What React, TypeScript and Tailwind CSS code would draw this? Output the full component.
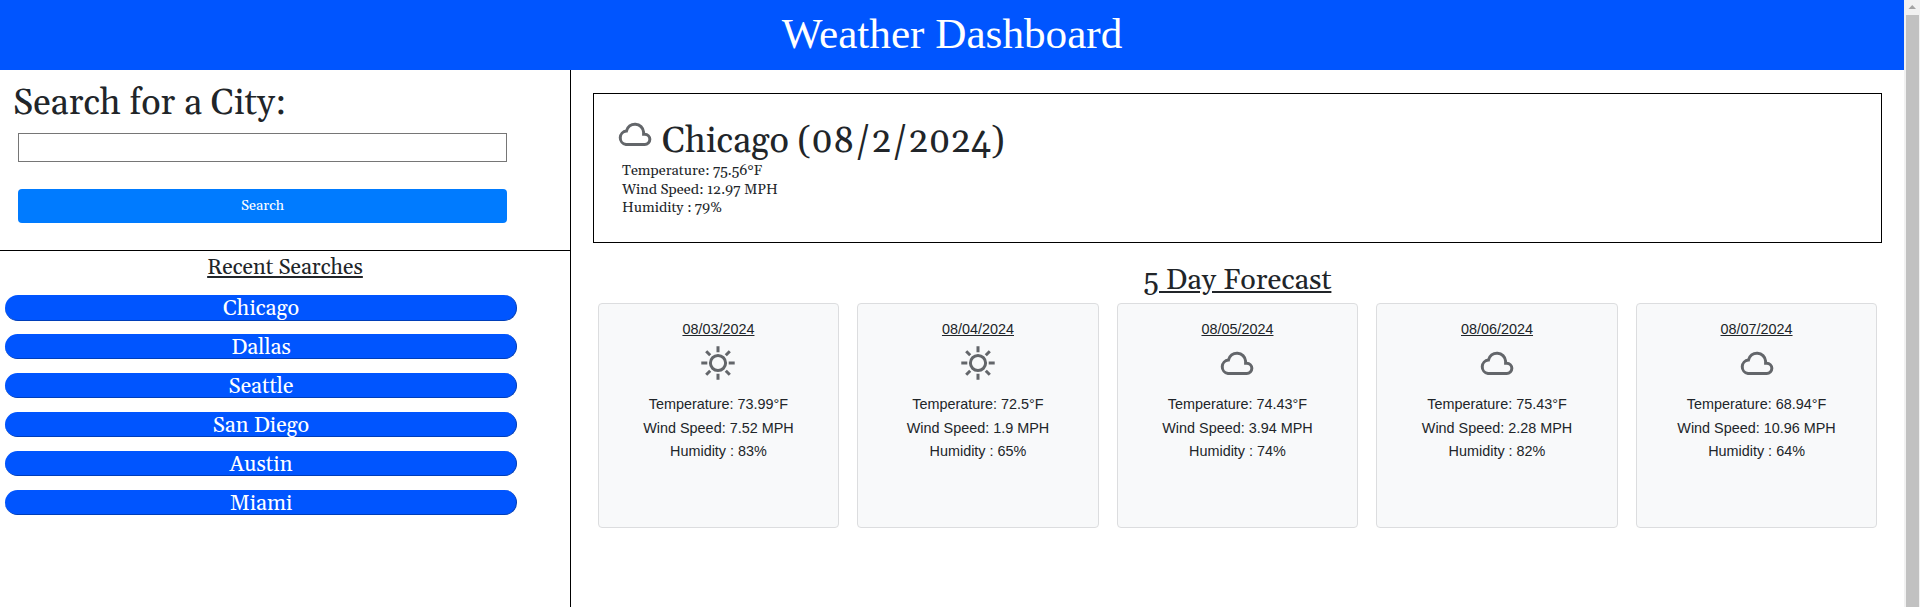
import React from 'react';

const cities = ['Chicago', 'Dallas', 'Seattle', 'San Diego', 'Austin', 'Miami'];

const days = [
  { date: '08/03/2024', icon: 'sun', temp: '73.99', wind: '7.52', humidity: '83' },
  { date: '08/04/2024', icon: 'sun', temp: '72.5', wind: '1.9', humidity: '65' },
  { date: '08/05/2024', icon: 'cloud', temp: '74.43', wind: '3.94', humidity: '74' },
  { date: '08/06/2024', icon: 'cloud', temp: '75.43', wind: '2.28', humidity: '82' },
  { date: '08/07/2024', icon: 'cloud', temp: '68.94', wind: '10.96', humidity: '64' },
];

function Cloud() {
  return (
    <svg width="34" height="24" viewBox="0 0 34 24" fill="none" stroke="#63666a" strokeWidth="3">
      <path d="M8 22.5H26.7a5.1 5.1 0 0 0 0-10.3H25.6V10.2A8.7 8.7 0 0 0 8.4 9.1A6.75 6.75 0 0 0 8 22.5Z" />
    </svg>
  );
}

function Sun() {
  return (
    <svg width="34" height="34" viewBox="0 0 34 34" fill="none" stroke="#63666a" strokeWidth="3">
      <circle cx="17" cy="17" r="7.6" />
      <path d="M17 0.3V6.3M17 27.7V33.7M0.3 17H6.3M27.7 17H33.7M5.2 5.2L9.2 9.2M24.8 24.8L28.8 28.8M5.2 28.8L9.2 24.8M24.8 9.2L28.8 5.2" />
    </svg>
  );
}

export default function App() {
  return (
    <div className="flex h-[607px] w-full overflow-hidden bg-white text-[#212529]">
      <div className="flex min-w-0 flex-1 flex-col">
        <header className="flex h-[70px] shrink-0 items-center justify-center bg-[#0055ff] pb-[2px]">
          <h1 className="font-['Liberation_Serif',serif] text-[43.2px] leading-none text-white">Weather Dashboard</h1>
        </header>
        <div className="flex flex-1">
          <aside className="flex w-[571px] flex-col border-r border-black font-[Georgia,Gelasio,'Liberation_Serif',serif]">
            <section className="h-[181px] border-b border-black pt-[14px]">
              <h2 className="pl-[13px] text-[36px] leading-[40px]">Search for a City:</h2>
              <input className="mt-[9px] ml-[18px] block h-[29px] w-[489px] border border-[#767676] bg-white" />
              <button className="mt-[27px] ml-[18px] block h-[34px] w-[489px] rounded-[4px] bg-[#007bff] text-[14.4px] leading-[20px] text-white">
                Search
              </button>
            </section>
            <h3 className="mt-[4px] text-center text-[21.6px] leading-[26px] underline">Recent Searches</h3>
            <ul className="mt-[14.4px] ml-[5px] flex w-[512px] flex-col gap-[13.7px]">
              {cities.map((c) => (
                <li key={c} className="h-[25.2px] rounded-[14px] border-r border-b border-[#003eb8] bg-[#0055ff] pl-px text-center text-[21.6px] leading-[27px] text-white">
                  {c}
                </li>
              ))}
            </ul>
          </aside>
          <main className="flex flex-1 flex-col pt-[23px] pr-[22px] pl-[22px]">
            <section className="h-[150px] border border-black pt-[23px] pl-[24px] font-[Georgia,Gelasio,'Liberation_Serif',serif]">
              <div className="flex">
                <div className="pt-[5px]">
                  <Cloud />
                </div>
                <h2 className="ml-[10px] pt-[5px] text-[36px] leading-[40px]">Chicago (08/2/2024)</h2>
              </div>
              <div className="pl-[4px] text-[14.4px] leading-[18.7px]">
                <p>Temperature: 75.56°F</p>
                <p>Wind Speed: 12.97 MPH</p>
                <p>Humidity : 79%</p>
              </div>
            </section>
            <h2 className="mt-[20px] text-center font-[Georgia,Gelasio,'Liberation_Serif',serif] text-[28.8px] leading-[36px] underline">
              5 Day Forecast
            </h2>
            <div className="mt-[4px] grid grid-cols-5 gap-[18px] px-[4.7px] font-['Liberation_Sans',sans-serif]">
              {days.map((d) => (
                <article key={d.date} className="flex h-[225px] flex-col items-center rounded-[4px] border border-[#dcdddf] bg-[#f8f9fa] pt-[14px] text-[14.4px] leading-[23.5px]">
                  <p className="leading-[22px] underline">{d.date}</p>
                  <div className="mt-[6px] flex h-[34px] items-center">{d.icon === 'sun' ? <Sun /> : <Cloud />}</div>
                  <p className="mt-[13px]">Temperature: {d.temp}°F</p>
                  <p>Wind Speed: {d.wind} MPH</p>
                  <p>Humidity : {d.humidity}%</p>
                </article>
              ))}
            </div>
          </main>
        </div>
      </div>
      <div className="flex w-[16px] flex-col items-center bg-[#f1f1f1]">
        <svg className="shrink-0" width="16" height="15" viewBox="0 0 16 15">
          <path d="M4.5 9H12L8.25 5Z" fill="#a3a3a3" />
        </svg>
        <div className="ml-px w-[13px] flex-1 bg-[#c1c1c1]" />
      </div>
    </div>
  );
}
